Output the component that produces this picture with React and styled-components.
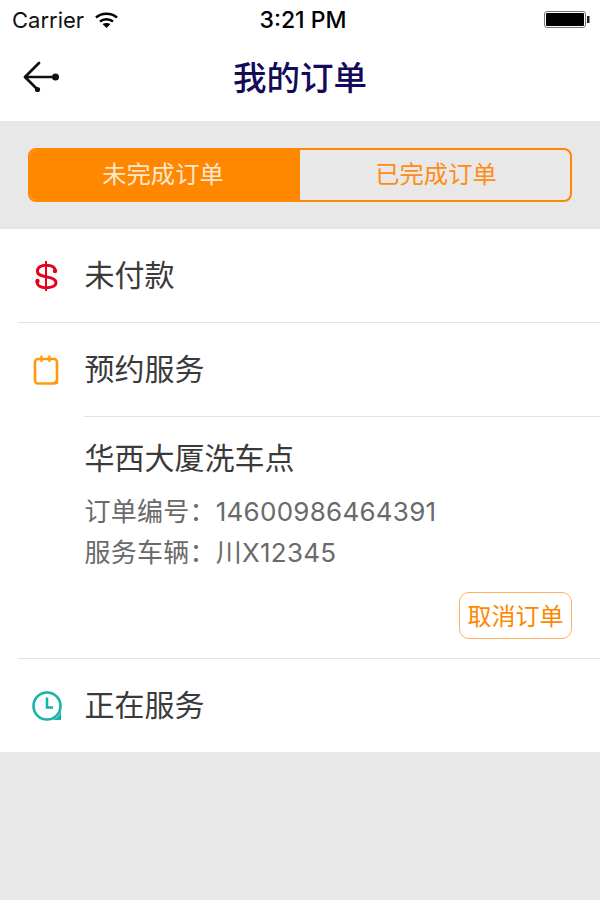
import React from "react";
import styled, { createGlobalStyle } from "styled-components";

const GlobalStyle = createGlobalStyle`
  html, body {
    margin: 0;
    padding: 0;
    background: #e8e8e8;
  }
  body {
    font-family: "Liberation Sans", "Noto Sans CJK SC", sans-serif;
  }
`;

const Page = styled.div`
  width: 600px;
  height: 900px;
  background: #e8e8e8;
  display: flex;
  flex-direction: column;
  overflow: hidden;
`;

const StatusBar = styled.div`
  height: 40px;
  background: #fff;
  display: grid;
  grid-template-columns: 1fr auto 1fr;
  align-items: center;
  padding: 0 10px 0 12px;
  color: #111;
  font-family: "Inter", "Liberation Sans", sans-serif;
  font-size: 22px;
`;

const StatusLeft = styled.div`
  display: flex;
  align-items: center;
  gap: 11px;
`;

const StatusTime = styled.div`
  margin-left: 4px;
  font-weight: 500;
  font-size: 23px;
  color: #000;
`;

const StatusRight = styled.div`
  display: flex;
  justify-content: flex-end;
`;

const NavBar = styled.div`
  height: 81px;
  background: #fff;
  display: flex;
  align-items: center;
  justify-content: center;
  position: relative;
  padding-bottom: 10px;
  box-sizing: border-box;
`;

const BackButton = styled.button`
  position: absolute;
  left: 22px;
  top: 20px;
  padding: 0;
  border: none;
  background: none;
  display: flex;
`;

const Title = styled.div`
  font-size: 33.5px;
  font-weight: 500;
  color: #140a5c;
`;

const FilterBar = styled.div`
  height: 108px;
  padding: 27px 28px;
  box-sizing: border-box;
  background: #e8e8e8;
`;

const Segment = styled.div`
  height: 54px;
  display: flex;
  box-sizing: border-box;
  border: 2px solid #ff8800;
  border-radius: 8px;
  overflow: hidden;
`;

const SegmentItem = styled.div`
  flex: 0 0 50%;
  display: flex;
  align-items: center;
  justify-content: center;
  box-sizing: border-box;
  padding-bottom: 6px;
  padding-right: ${(p) => (p.$active ? "4px" : "0")};
  padding-left: ${(p) => (p.$active ? "0" : "2px")};
  font-size: 24.3px;
  font-weight: 400;
  background: ${(p) => (p.$active ? "#ff8800" : "transparent")};
  color: ${(p) => (p.$active ? "#fbe6cf" : "#ff8c14")};
`;

const List = styled.div`
  background: #fff;
`;

const Row = styled.div`
  height: 93px;
  box-sizing: border-box;
  display: flex;
  align-items: center;
  padding-left: 18px;
`;

const IconSlot = styled.div`
  width: 56px;
  display: flex;
  align-items: center;
  justify-content: center;
  margin-right: 10.5px;
`;

const RowLabel = styled.div`
  font-size: 30px;
  color: #3a3a3a;
  margin-bottom: 5px;
`;

const Divider = styled.div`
  height: 1px;
  background: #e2e2e2;
  margin-left: ${(p) => p.$inset}px;
`;

const Detail = styled.div`
  padding: 22px 28px 19px 84.5px;
  height: 241px;
  box-sizing: border-box;
  display: flex;
  flex-direction: column;
`;

const Shop = styled.div`
  font-size: 30px;
  line-height: 40px;
  color: #3a3a3a;
  margin-bottom: 12px;
`;

const Info = styled.div`
  font-family: "Inter", "Noto Sans CJK SC", sans-serif;
  font-size: 26px;
  line-height: 41px;
  letter-spacing: 0.25px;
  color: #6a6a6a;
`;

const Actions = styled.div`
  margin-top: auto;
  display: flex;
  justify-content: flex-end;
`;

const CancelButton = styled.button`
  width: 113px;
  height: 47px;
  padding: 0 0 2px;
  background: #fff;
  border: 1.5px solid #ffb060;
  border-radius: 10px;
  color: #ff8800;
  font-family: inherit;
  font-size: 24px;
`;

const DollarIcon = () => (
  <svg width="26" height="30" viewBox="0 0 26 30" fill="none" stroke="#e8001c" strokeLinecap="round">
    <path
      d="M22.5 9.5C22 5.8 17.5 4.2 13 4.2C8 4.2 4.4 6.5 4.4 10.2C4.4 13.8 8 14.8 13 15.8C18.5 16.8 23 18 23 21.5C23 25 18.5 26.8 13 26.8C8 26.8 4 24.8 4 20.5"
      strokeWidth="3"
    />
    <path d="M13 0.5V29.5" strokeWidth="2" />
    <circle cx="22" cy="10" r="2.2" fill="#e8001c" stroke="none" />
    <circle cx="4.5" cy="20" r="2.2" fill="#e8001c" stroke="none" />
  </svg>
);

const NoteIcon = () => (
  <svg width="26" height="30" viewBox="0 0 26 30" fill="none">
    <rect x="2" y="4" width="22" height="24.5" rx="3" stroke="#ff9a0a" strokeWidth="2.6" />
    <path d="M8.5 0.5V7M16.5 0.5V7" stroke="#ff9a0a" strokeWidth="2.2" />
    <path d="M25 21L25 29L17 29C20 28 24 25 25 21Z" fill="#ff9a0a" />
  </svg>
);

const ClockIcon = () => (
  <svg width="32" height="32" viewBox="0 0 32 32" fill="none">
    <circle cx="17" cy="16" r="13.5" stroke="#17b5a6" strokeWidth="2.6" />
    <path d="M22 30C26 29 29.5 26 31 21L31 30Z" fill="#17b5a6" />
    <path d="M17 7.5V17.5H23" stroke="#17b5a6" strokeWidth="2.6" />
  </svg>
);

const BackIcon = () => (
  <svg width="40" height="34" viewBox="0 0 40 34" fill="none" stroke="#111" strokeLinecap="round">
    <path d="M3 17H33" strokeWidth="2.4" />
    <path d="M3 17L17 3M3 17L15 29" strokeWidth="2.8" />
    <circle cx="33.5" cy="17" r="3.5" fill="#111" stroke="none" />
    <circle cx="15.5" cy="29.5" r="2.6" fill="#111" stroke="none" />
  </svg>
);

const WifiIcon = () => (
  <svg width="23" height="16" viewBox="0 0 23 16" fill="none" stroke="#000" strokeWidth="2.4">
    <path d="M1 5.5C7 0.5 16 0.5 22 5.5" />
    <path d="M5 9.5C8.5 6.5 14.5 6.5 18 9.5" />
    <path d="M11.5 16L7.5 12C10 10.5 13 10.5 15.5 12Z" fill="#000" stroke="none" />
  </svg>
);

const BatteryIcon = () => (
  <svg width="46" height="18" viewBox="0 0 46 18" fill="none">
    <rect x="0.5" y="0.5" width="41" height="16" rx="2.5" stroke="#777" fill="#fff" />
    <rect x="2" y="2" width="38" height="13" rx="1" fill="#000" />
    <rect x="43" y="5" width="2.5" height="7" fill="#222" />
  </svg>
);

const App = () => (
  <Page>
    <GlobalStyle />
    <StatusBar>
      <StatusLeft>
        Carrier
        <WifiIcon />
      </StatusLeft>
      <StatusTime>3:21 PM</StatusTime>
      <StatusRight>
        <BatteryIcon />
      </StatusRight>
    </StatusBar>
    <NavBar>
      <BackButton>
        <BackIcon />
      </BackButton>
      <Title>我的订单</Title>
    </NavBar>
    <FilterBar>
      <Segment>
        <SegmentItem $active>未完成订单</SegmentItem>
        <SegmentItem>已完成订单</SegmentItem>
      </Segment>
    </FilterBar>
    <List>
      <Row>
        <IconSlot>
          <DollarIcon />
        </IconSlot>
        <RowLabel>未付款</RowLabel>
      </Row>
      <Divider $inset={18} />
      <Row>
        <IconSlot>
          <NoteIcon />
        </IconSlot>
        <RowLabel>预约服务</RowLabel>
      </Row>
      <Divider $inset={84} />
      <Detail>
        <Shop>华西大厦洗车点</Shop>
        <Info>订单编号：14600986464391</Info>
        <Info>服务车辆：川X12345</Info>
        <Actions>
          <CancelButton>取消订单</CancelButton>
        </Actions>
      </Detail>
      <Divider $inset={18} />
      <Row>
        <IconSlot>
          <ClockIcon />
        </IconSlot>
        <RowLabel>正在服务</RowLabel>
      </Row>
    </List>
  </Page>
);

export default App;
